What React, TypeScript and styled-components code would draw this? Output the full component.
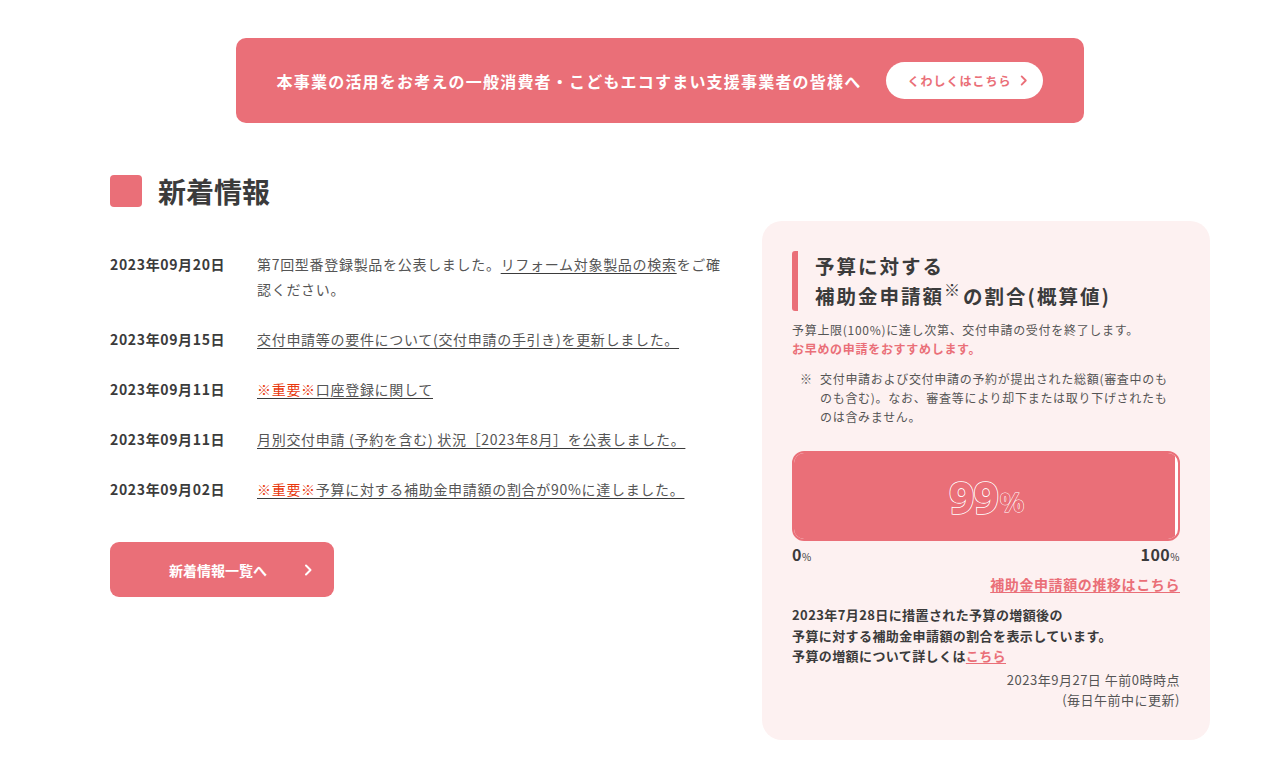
import React from 'react';
import styled, { createGlobalStyle } from 'styled-components';

const PINK = '#ea6f78';
const TEXT = '#3b3b3b';

const GlobalStyle = createGlobalStyle`
  * { box-sizing: border-box; }
  body {
    margin: 0;
    background: #fff;
    color: ${TEXT};
    font-family: "Noto Sans CJK JP", "Noto Sans", sans-serif;
  }
`;

const Page = styled.div`
  width: 1100px;
  margin-left: 110px;
  padding-top: 38px;
  padding-bottom: 36px;
`;

const Banner = styled.div`
  width: 848px;
  height: 85px;
  margin-left: 126px;
  background: ${PINK};
  border-radius: 10px;
  display: flex;
  align-items: center;
  justify-content: center;
  gap: 25px;
`;

const BannerText = styled.p`
  margin: 0;
  color: #fff;
  font-size: 16px;
  font-weight: 700;
  letter-spacing: 1.2px;
`;

const PillButton = styled.a`
  display: flex;
  align-items: center;
  justify-content: space-between;
  width: 157px;
  height: 37px;
  padding: 0 14px 0 21px;
  background: #fff;
  border-radius: 19px;
  color: ${PINK};
  font-size: 12px;
  font-weight: 700;
  letter-spacing: 1px;
`;

const Main = styled.div`
  display: flex;
  justify-content: space-between;
  margin-top: 52px;
`;

const NewsColumn = styled.section`
  width: 620px;
`;

const Heading = styled.h2`
  display: flex;
  align-items: center;
  gap: 16px;
  margin: 0;
  font-size: 28px;
  font-weight: 700;
  line-height: 32px;
  color: ${TEXT};
  &::before {
    content: '';
    width: 32px;
    height: 32px;
    border-radius: 4px;
    background: ${PINK};
  }
`;

const NewsList = styled.dl`
  margin: 45px 0 0;
  display: flex;
  flex-direction: column;
  gap: 25px;
`;

const NewsRow = styled.div`
  display: flex;
  line-height: 25px;
`;

const NewsDate = styled.dt`
  width: 147px;
  flex-shrink: 0;
  font-weight: 700;
  font-size: 14px;
  letter-spacing: 0.65px;
`;

const NewsBody = styled.dd`
  margin: 0;
  width: 470px;
  color: #555;
  font-size: 14px;
  letter-spacing: 0.7px;
`;

const Link = styled.a<{ $red?: boolean }>`
  color: ${(p) => (p.$red ? '#e8380d' : '#555')};
  text-decoration: underline;
  text-underline-offset: 3px;
  text-decoration-color: #3b3b3b;
`;

const ListButton = styled.a`
  display: flex;
  align-items: center;
  justify-content: space-between;
  width: 224px;
  height: 55px;
  margin-top: 40px;
  padding: 0 20px 0 59px;
  border-radius: 9px;
  background: ${PINK};
  color: #fff;
  font-size: 14px;
  font-weight: 700;
`;

const Card = styled.aside`
  width: 448px;
  margin-top: 46px;
  padding: 30px 30px 30px;
  background: #fdf1f1;
  border-radius: 20px;
`;

const CardTitle = styled.h3`
  margin: 0;
  padding-left: 17px;
  border-left: 6px solid ${PINK};
  border-radius: 3px;
  font-size: 19.5px;
  font-weight: 700;
  line-height: 30px;
  letter-spacing: 2px;
  color: ${TEXT};
  sup {
    font-size: 16px;
    font-weight: 400;
    vertical-align: 8px;
    line-height: 0;
    letter-spacing: 0;
    margin-right: 3px;
  }
`;

const Lead = styled.p`
  margin: 9px 0 0;
  font-size: 12px;
  line-height: 19px;
  letter-spacing: 0.7px;
  color: #555;
`;

const Strong = styled.strong`
  color: ${PINK};
  font-weight: 700;
`;

const Note = styled.p`
  display: flex;
  margin: 11px 0 0;
  padding-left: 8px;
  padding-right: 10px;
  font-size: 12px;
  line-height: 19px;
  letter-spacing: 0.7px;
  color: #555;
  span:first-child {
    width: 20px;
    flex-shrink: 0;
  }
`;

const Gauge = styled.div`
  position: relative;
  height: 90px;
  margin-top: 25px;
  border: 2px solid ${PINK};
  border-radius: 12px;
  background: #fff;
  overflow: hidden;
`;

const GaugeFill = styled.div`
  height: 100%;
  background: ${PINK};
`;

const GaugeValue = styled.div`
  position: absolute;
  inset: 0;
  display: flex;
  align-items: center;
  justify-content: center;
  padding-top: 2px;
  color: ${PINK};
  -webkit-text-stroke: 1.6px #fff;
  paint-order: stroke fill;
  font-family: "Noto Sans", "Noto Sans CJK JP", sans-serif;
  font-weight: 800;
  font-size: 44px;
  letter-spacing: -1px;
  small {
    font-size: 26px;
    margin-top: 10px;
    margin-left: 2px;
    -webkit-text-stroke: 1px #fff;
  }
`;

const Scale = styled.div`
  display: flex;
  justify-content: space-between;
  margin-top: 1px;
  font-size: 16px;
  font-weight: 700;
  line-height: 24px;
  letter-spacing: 0.5px;
  small {
    font-size: 10px;
    font-weight: 400;
  }
`;

const RightLink = styled.a`
  display: block;
  text-align: right;
  margin-top: 4px;
  color: ${PINK};
  font-size: 14px;
  font-weight: 700;
  line-height: 22px;
  letter-spacing: 0.6px;
  text-decoration: underline;
  text-underline-offset: 2px;
`;

const Explain = styled.p`
  margin: 10px 0 0;
  font-size: 13px;
  font-weight: 700;
  line-height: 20.5px;
  letter-spacing: 0.4px;
  a {
    color: ${PINK};
    text-decoration: underline;
    text-underline-offset: 2px;
  }
`;

const Updated = styled.p`
  margin: 3px 0 0;
  text-align: right;
  font-size: 13px;
  line-height: 20px;
  letter-spacing: 0.5px;
  color: #555;
`;

const Chevron: React.FC<{ size?: number }> = ({ size = 12 }) => (
  <svg width={size} height={size} viewBox="0 0 12 12" fill="none">
    <path d="M4 1.5 8.5 6 4 10.5" stroke="currentColor" strokeWidth="2" strokeLinecap="round" strokeLinejoin="round" />
  </svg>
);

const news = [
  {
    date: '2023年09月20日',
    body: (
      <>
        第7回型番登録製品を公表しました。<Link>リフォーム対象製品の検索</Link>をご確認ください。
      </>
    ),
  },
  { date: '2023年09月15日', body: <Link>交付申請等の要件について(交付申請の手引き)を更新しました。</Link> },
  {
    date: '2023年09月11日',
    body: (
      <Link>
        <Link $red>※重要※</Link>口座登録に関して
      </Link>
    ),
  },
  { date: '2023年09月11日', body: <Link>月別交付申請 (予約を含む) 状況［2023年8月］を公表しました。</Link> },
  {
    date: '2023年09月02日',
    body: (
      <Link>
        <Link $red>※重要※</Link>予算に対する補助金申請額の割合が90%に達しました。
      </Link>
    ),
  },
];

const ratio = 99.1;

export default function App() {
  return (
    <>
      <GlobalStyle />
      <Page>
        <Banner>
          <BannerText>本事業の活用をお考えの一般消費者・こどもエコすまい支援事業者の皆様へ</BannerText>
          <PillButton>
            くわしくはこちら
            <Chevron size={11} />
          </PillButton>
        </Banner>
        <Main>
          <NewsColumn>
            <Heading>新着情報</Heading>
            <NewsList>
              {news.map((n, i) => (
                <NewsRow key={i}>
                  <NewsDate>{n.date}</NewsDate>
                  <NewsBody>{n.body}</NewsBody>
                </NewsRow>
              ))}
            </NewsList>
            <ListButton>
              新着情報一覧へ
              <Chevron />
            </ListButton>
          </NewsColumn>
          <Card>
            <CardTitle>
              予算に対する
              <br />
              補助金申請額<sup>※</sup>の割合(概算値)
            </CardTitle>
            <Lead>
              予算上限(100%)に達し次第、交付申請の受付を終了します。
              <br />
              <Strong>お早めの申請をおすすめします。</Strong>
            </Lead>
            <Note>
              <span>※</span>
              <span>交付申請および交付申請の予約が提出された総額(審査中のものも含む)。なお、審査等により却下または取り下げされたものは含みません。</span>
            </Note>
            <Gauge>
              <GaugeFill style={{ width: `${ratio}%` }} />
              <GaugeValue>
                99<small>%</small>
              </GaugeValue>
            </Gauge>
            <Scale>
              <span>
                0<small>%</small>
              </span>
              <span>
                100<small>%</small>
              </span>
            </Scale>
            <RightLink>補助金申請額の推移はこちら</RightLink>
            <Explain>
              2023年7月28日に措置された予算の増額後の
              <br />
              予算に対する補助金申請額の割合を表示しています。
              <br />
              予算の増額について詳しくは<a>こちら</a>
            </Explain>
            <Updated>
              2023年9月27日 午前0時時点
              <br />
              (毎日午前中に更新)
            </Updated>
          </Card>
        </Main>
      </Page>
    </>
  );
}
